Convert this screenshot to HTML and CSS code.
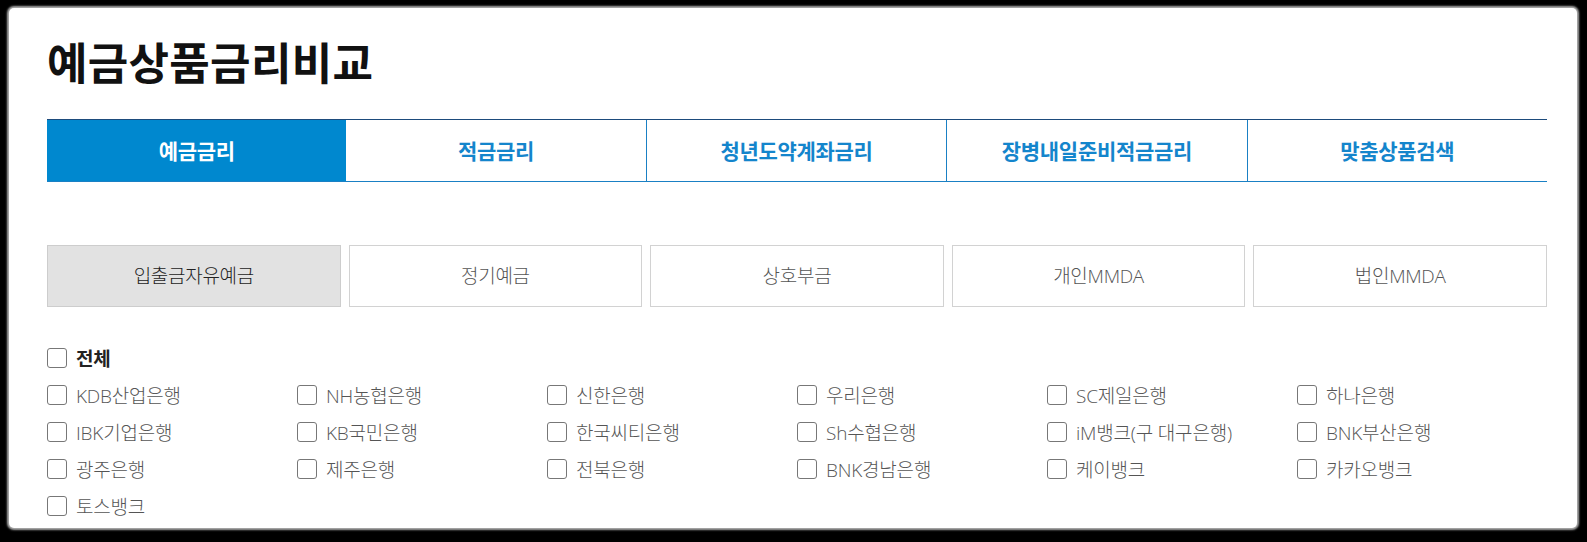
FILE: index.html
```html
<!DOCTYPE html>
<html lang="ko">
<head>
    <meta charset="UTF-8">
    <meta name="viewport" content="width=device-width, initial-scale=1.0">
    <title>예금상품금리비교</title>
    <link rel="stylesheet" href="styles.css">
</head>
<body>
    <div class="panel">
        <h1 class="title">예금상품금리비교</h1>

        <ul class="tabs">
            <li class="tab active">예금금리</li>
            <li class="tab">적금금리</li>
            <li class="tab">청년도약계좌금리</li>
            <li class="tab">장병내일준비적금금리</li>
            <li class="tab">맞춤상품검색</li>
        </ul>

        <ul class="subtabs">
            <li class="subtab active">입출금자유예금</li>
            <li class="subtab">정기예금</li>
            <li class="subtab">상호부금</li>
            <li class="subtab">개인MMDA</li>
            <li class="subtab">법인MMDA</li>
        </ul>

        <div class="banks">
            <label class="bank all"><input type="checkbox"> 전체</label>
            <div class="bank-grid">
                <label class="bank"><input type="checkbox"> KDB산업은행</label>
                <label class="bank"><input type="checkbox"> NH농협은행</label>
                <label class="bank"><input type="checkbox"> 신한은행</label>
                <label class="bank"><input type="checkbox"> 우리은행</label>
                <label class="bank"><input type="checkbox"> SC제일은행</label>
                <label class="bank"><input type="checkbox"> 하나은행</label>
                <label class="bank"><input type="checkbox"> IBK기업은행</label>
                <label class="bank"><input type="checkbox"> KB국민은행</label>
                <label class="bank"><input type="checkbox"> 한국씨티은행</label>
                <label class="bank"><input type="checkbox"> Sh수협은행</label>
                <label class="bank"><input type="checkbox"> iM뱅크(구 대구은행)</label>
                <label class="bank"><input type="checkbox"> BNK부산은행</label>
                <label class="bank"><input type="checkbox"> 광주은행</label>
                <label class="bank"><input type="checkbox"> 제주은행</label>
                <label class="bank"><input type="checkbox"> 전북은행</label>
                <label class="bank"><input type="checkbox"> BNK경남은행</label>
                <label class="bank"><input type="checkbox"> 케이뱅크</label>
                <label class="bank"><input type="checkbox"> 카카오뱅크</label>
                <label class="bank"><input type="checkbox"> 토스뱅크</label>
            </div>
        </div>
    </div>
</body>
</html>
```

FILE: styles.css
```css
body {
    margin: 0;
    height: 542px;
    overflow: hidden;
    background-color: #000;
    font-family: "Noto Sans CJK KR", "Noto Sans", sans-serif;
}
.panel {
    height: 520px;
    margin: 8px 10px 0 9px;
    padding: 23px 0 0 38px;
    box-sizing: border-box;
    background-color: #fff;
    border-radius: 5px;
    box-shadow: 0 0 2px 2px #aaa;
}
.title {
    margin: 0;
    font-size: 44px;
    line-height: 60px;
    font-weight: 700;
    letter-spacing: 0.3px;
    color: #111;
}
.tabs {
    display: flex;
    width: 1500px;
    margin: 28px 0 0;
    padding: 0;
    list-style: none;
    border-top: 1px solid #1d4b7c;
    border-bottom: 1px solid #1a80c4;
}
.tab {
    flex: 1;
    height: 61px;
    line-height: 61px;
    text-align: center;
    font-size: 21px;
    font-weight: 700;
    letter-spacing: -0.3px;
    color: #1485cc;
    border-left: 1px solid #1a80c4;
}
.tab:first-child {
    border-left: none;
}
.tab.active {
    background-color: #0088cf;
    color: #fff;
}
.tab.active + .tab {
    border-left: none;
}
.subtabs {
    display: flex;
    gap: 8px;
    width: 1500px;
    margin: 63px 0 0;
    padding: 0;
    list-style: none;
}
.subtab {
    flex: 1;
    height: 60px;
    line-height: 60px;
    text-align: center;
    font-family: "Open Sans", "Noto Sans CJK KR", sans-serif;
    font-size: 19px;
    font-weight: 300;
    letter-spacing: -0.3px;
    color: #555;
    border: 1px solid #d2d2d2;
}
.subtab.active {
    background-color: #e2e2e2;
    border-color: #cdcdcd;
    color: #222;
}
.banks {
    margin-top: 32px;
}
.bank-grid {
    display: grid;
    grid-template-columns: repeat(6, 250px);
}
.bank {
    display: flex;
    align-items: center;
    gap: 9px;
    height: 37px;
    font-family: "Open Sans", "Noto Sans CJK KR", sans-serif;
    font-size: 19px;
    font-weight: 300;
    letter-spacing: -0.2px;
    color: #555;
}
.bank.all {
    font-weight: 700;
    color: #222;
}
.bank input {
    appearance: none;
    width: 20px;
    height: 20px;
    margin: 0;
    border: 1.5px solid #777;
    border-radius: 3px;
    background-color: #fff;
}
```
